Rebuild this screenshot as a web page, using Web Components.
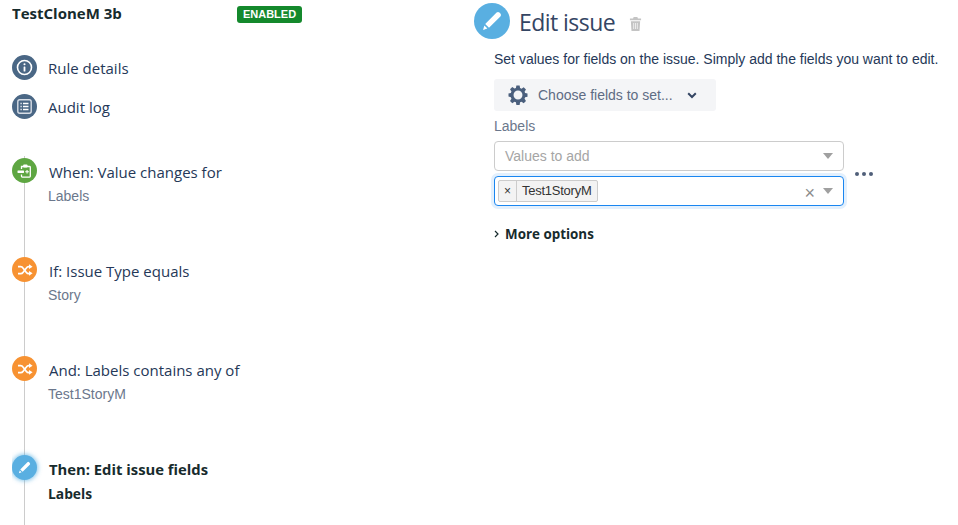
<!DOCTYPE html>
<html lang="en"><head><meta charset="utf-8"><title>Edit issue</title>
<style>
html,body{margin:0;padding:0;background:#fff;overflow:hidden}
body{width:958px;height:525px;font-family:"Open Sans","Noto Sans",sans-serif;color:#172b4d}
app-page{height:525px}
</style></head><body>
<app-page>
  <rule-sidebar slot="left">
    <rule-header name="TestCloneM 3b" status="ENABLED"></rule-header>
    <nav-item icon="info" label="Rule details"></nav-item>
    <nav-item icon="log" label="Audit log"></nav-item>
    <side-divider></side-divider>
    <rule-step kind="when" title="When: Value changes for" sub="Labels"></rule-step>
    <rule-step kind="cond" title="If: Issue Type equals" sub="Story"></rule-step>
    <rule-step kind="cond" title="And: Labels contains any of" sub="Test1StoryM"></rule-step>
    <rule-step kind="then" title="Then: Edit issue fields" sub="Labels" active></rule-step>
  </rule-sidebar>
  <edit-panel slot="right"></edit-panel>
</app-page>
<script>
const PENCIL=s=>`<svg width="${s}" height="${s}" viewBox="0 0 24 24"><path fill="#fff" d="M16.600 3.600a2 2 0 0 1 2.800 0l1 1a2 2 0 0 1 0 2.800L9 18.800l-3.800-3.800zM4.400 16.600l3 3L3 21z"/></svg>`;
const SHUFFLE=`<svg width="16" height="16" viewBox="0 0 16 16" fill="none" stroke="#fff" stroke-width="1.700"><path d="M1 4.700h2.600c1.200 0 1.900.5 2.600 1.500l3 4c.7 1 1.400 1.500 2.600 1.500H13"/><path d="M1 11.700h2.600c1.200 0 1.900-.5 2.600-1.500l3-4c.7-1 1.400-1.500 2.600-1.500H13"/><path fill="#fff" stroke="none" d="M12 2.300 15.600 4.700 12 7.100zM12 8.900l3.600 2.400-3.600 2.400z"/></svg>`;
const WHEN=`<svg width="18" height="18" viewBox="0 0 18 18"><path fill="none" stroke="#fff" stroke-width="1.300" d="M5.500 7V4.500h8a.8.8 0 0 1 .8.800v9a.8.8 0 0 1-.8.800h-7.200a.8.800 0 0 1-.8-.8V12.500"/><rect x="7.200" y="2.500" width="4.300" height="3" rx=".8" fill="#fff"/><rect x="1.500" y="8.600" width="6.500" height="2.300" rx=".4" fill="#fff"/><path fill="#fff" d="M9.200 9.200h1.300V7.900h1.100v1.300h1.300v1.100h-1.300v1.300h-1.100v-1.300H9.200z"/></svg>`;
const ICONS={
 info:`<svg width="17" height="17" viewBox="0 0 17 17"><circle cx="8.500" cy="8.500" r="7" fill="none" stroke="#fff" stroke-width="1.600"/><rect x="7.600" y="7.400" width="1.800" height="5" rx=".5" fill="#fff"/><circle cx="8.500" cy="5.200" r="1.050" fill="#fff"/></svg>`,
 log:`<svg width="17" height="17" viewBox="0 0 17 17"><rect x="1.800" y="1.800" width="13.400" height="13.400" rx="2" fill="none" stroke="#d7dde6" stroke-width="1.400"/><path stroke="#fff" stroke-width="1.300" d="M4.500 5.500h1.200M7 5.500h5.500M4.500 8.500h1.200M7 8.500h5.500M4.500 11.500h1.200M7 11.500h5.500"/></svg>`
};
function def(name,render){customElements.define(name,class extends HTMLElement{connectedCallback(){if(this.shadowRoot)return;this.attachShadow({mode:'open'}).innerHTML=render(this)}})}

def('app-page',()=>`<style>:host{display:grid;grid-template-columns:474px 1fr}</style><slot name="left"></slot><slot name="right"></slot>`);
def('rule-sidebar',()=>`<style>:host{display:flex;flex-direction:column;width:290px;margin-left:12px;height:525px;overflow:hidden}</style><slot></slot>`);
def('rule-header',e=>`<style>:host{display:flex;justify-content:space-between;align-items:center;height:17px;margin-top:6px;margin-bottom:32px}
.n{font:700 15px/17px "Open Sans",sans-serif;color:#172b2d;margin-top:-2px}
.b{background:#14892c;color:#fff;border-radius:3px;font:700 11px/17px "Liberation Sans",Arial,sans-serif;width:65px;text-align:center;height:17px}</style>
<span class="n">${e.getAttribute('name')}</span><span class="b">${e.getAttribute('status')}</span>`);
def('nav-item',e=>`<style>:host{display:flex;align-items:center;height:25px;margin-bottom:14px;gap:11px}
.c{width:25px;height:25px;border-radius:50%;background:#4a6785;display:flex;align-items:center;justify-content:center;flex:none}
.t{font:400 15px/25px "Open Sans",sans-serif;color:#253858;margin-top:1px}</style>
<span class="c">${ICONS[e.getAttribute('icon')]}</span><span class="t">${e.getAttribute('label')}</span>`);
def('side-divider',()=>`<style>:host{display:block;height:1px;background:#ccc;margin-top:3px;margin-bottom:20px}</style>`);
def('rule-step',e=>{const k=e.getAttribute('kind'),a=e.hasAttribute('active');
 const col={when:'#5ea642',cond:'#f79232',then:'#59afe1'}[k];
 const ic={when:WHEN,cond:SHUFFLE,then:PENCIL(15)}[k];
 return `<style>:host{display:grid;grid-template-columns:25px 1fr;column-gap:11px;height:99px;box-sizing:border-box;padding-top:2px;flex:none;background:linear-gradient(#ccc,#ccc) 12px 0/1px 100% no-repeat}
 .c{width:25px;height:25px;border-radius:50%;background:${col};display:flex;align-items:center;justify-content:center;${a?'box-shadow:0 0 4px 1px rgba(89,175,225,.7);':''}}
 .t{font:${a?'700 14.800px':'400 15px'}/25px "Open Sans",sans-serif;color:${a?'#172b2d':'#253858'};margin-left:1px;margin-top:2px}
 .s{font:${a?'700 13.800px/23px "Open Sans",sans-serif':'400 14px/23px "Liberation Sans",Arial,sans-serif'};color:${a?'#172b2d':'#6b778c'}}
 </style>
 <span class="c">${ic}</span><div><div class="t">${e.getAttribute('title')}</div><div class="s">${e.getAttribute('sub')}</div></div>`});
def('edit-panel',()=>`<style>:host{display:block;padding-top:3px}
.h{display:flex;align-items:center;height:36px;gap:9px}
.c{width:36px;height:36px;border-radius:50%;background:#59afe1;display:flex;align-items:center;justify-content:center}
h1{margin:2px 0 0;font:400 23px/36px "Open Sans",sans-serif;color:#344563;letter-spacing:-.55px}
.tr{margin-left:5px;display:flex;margin-top:5px}
.b{margin-left:20px;width:444px}
p{margin:10px 0 0;font:400 14px/20px "Liberation Sans",Arial,sans-serif;color:#253858;white-space:nowrap;height:20px}
.lab{font:400 14px/16px "Liberation Sans",Arial,sans-serif;color:#6b778c;margin-top:7px}
.sel{display:grid;grid-template-columns:350px auto;row-gap:5px;column-gap:11px;align-items:center;margin-top:7px;width:max-content}
.sel dots-menu{grid-column:2;grid-row:1/span 2}
.more{display:flex;align-items:center;gap:6px;margin-top:18px;font:700 13.400px/20px "Open Sans",sans-serif;color:#172b2d}
</style>
<div class="h"><span class="c">${PENCIL(24)}</span><h1>Edit issue</h1><span class="tr"><svg width="13" height="14" viewBox="0 0 14 14" preserveAspectRatio="none"><path fill="#c4c4c4" d="M5 0h4l.600 1.500H13v1.800H1V1.500h3.400zM2 4.300h10l-.7 9.700H2.700z"/><path stroke="#fff" stroke-width=".7" d="M5 6v6M7 6v6M9 6v6"/></svg></span></div>
<div class="b"><p>Set values for fields on the issue. Simply add the fields you want to edit.</p>
<choose-button></choose-button>
<div class="lab">Labels</div>
<div class="sel"><select-box placeholder="Values to add" style="grid-column:1;grid-row:1"></select-box><select-box focused tag="Test1StoryM" style="grid-column:1;grid-row:2"></select-box><dots-menu></dots-menu></div>
<div class="more"><svg width="5" height="8" viewBox="0 0 5 8" fill="none" stroke="#172b2d" stroke-width="1.200"><path d="M1 1l3 3-3 3"/></svg><span>More options</span></div>
</div>`);
def('choose-button',()=>`<style>:host{display:flex;align-items:center;width:222px;height:32px;background:#f4f5f7;border-radius:3px;margin-top:10px;box-sizing:border-box;padding-left:14px}
svg.g{flex:none}.t{font:400 14px/32px "Liberation Sans",Arial,sans-serif;color:#5e6c84;margin-left:10px}
.v{margin-left:14px;display:flex}</style>
<svg class="g" width="20" height="20" viewBox="0 0 20 20"><path fill="#4a5f7d" fill-rule="evenodd" d="M8.300 0h3.400l.5 2.700 1.500.6 2.300-1.500 2.400 2.400-1.500 2.300.6 1.500 2.500.5v3.400l-2.500.5-.6 1.500 1.500 2.300-2.400 2.400-2.300-1.500-1.500.6-.5 2.700H8.300l-.5-2.700-1.500-.6-2.300 1.500-2.400-2.400 1.500-2.300-.6-1.500L0 11.700V8.300l2.500-.5.6-1.500-1.500-2.300L4 1.600l2.300 1.500 1.500-.6zM10 5.300a4.700 4.700 0 1 0 0 9.400 4.700 4.700 0 0 0 0-9.400z" transform="translate(.5 .5) scale(.95)"/></svg>
<span class="t">Choose fields to set...</span><span class="v"><svg width="10" height="7" viewBox="0 0 10 7" fill="none" stroke="#344563" stroke-width="2"><path d="M1.200 1.300 5 5l3.800-3.700"/></svg></span>`);
def('select-box',e=>{const f=e.hasAttribute('focused'),tag=e.getAttribute('tag'),ph=e.getAttribute('placeholder');
 return `<style>:host{display:flex;align-items:center;width:350px;height:30px;box-sizing:border-box;flex:none;border:1px solid ${f?'#1a86f0':'#ccc'};border-radius:4px;background:#fff;${f?'box-shadow:0 0 0 3px #e3f0fd;':''}padding-left:${f?3:10}px;padding-right:10px}
 .ph{font:400 14px/28px "Liberation Sans",Arial,sans-serif;color:#a5a5a5;flex:1}
 .tag{display:flex;height:22px;border:1px solid #ccc;border-radius:2px;background:#f3f3f3;font:400 13px/20px "Liberation Sans",Arial,sans-serif;color:#333;box-sizing:border-box;letter-spacing:-.25px}
 .x{width:17px;border-right:1px solid #ccc;text-align:center;font-size:12px;letter-spacing:0}.l{padding:0 5px}
 .sp{flex:1}.cl{color:#8c8c8c;font:400 18px/20px "Liberation Sans",Arial,sans-serif;margin-right:8px;margin-top:4px}
 .a{width:0;height:0;border:5.500px solid transparent;border-top:6px solid #a0a0a0;border-bottom:0}</style>
 ${ph?`<span class="ph">${ph}</span>`:`<span class="tag"><span class="x">×</span><span class="l">${tag}</span></span><span class="sp"></span><span class="cl">×</span>`}<span class="a"></span>`});
def('dots-menu',()=>`<style>:host{display:flex;gap:3px}i{width:4px;height:4px;border-radius:50%;background:#505f79;display:block}</style><i></i><i></i><i></i>`);
</script>
</body></html>
